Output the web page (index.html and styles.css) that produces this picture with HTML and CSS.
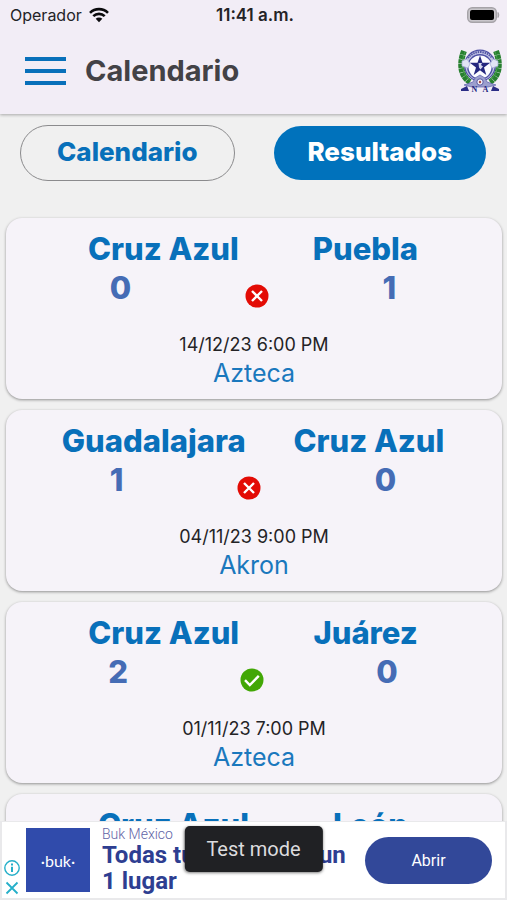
FILE: index.html
```html
<!DOCTYPE html>
<html lang="es">
<head>
<meta charset="utf-8">
<meta name="viewport" content="width=device-width, initial-scale=1">
<title>Calendario</title>
<link rel="stylesheet" href="styles.css">
</head>
<body>
<svg class="defs" aria-hidden="true">
  <symbol id="loss" viewBox="0 0 24 24">
    <circle cx="12" cy="12" r="11.5" fill="#e30b05"/>
    <path d="M7 7l10 10M17 7l-10 10" fill="none" stroke="#fff" stroke-width="2.400"/>
  </symbol>
  <symbol id="win" viewBox="0 0 24 24">
    <circle cx="12" cy="12" r="11.5" fill="#42a706"/>
    <path d="M5 12.200l4.800 4.800 9-9.200" fill="none" stroke="#fff" stroke-width="2.400"/>
  </symbol>
</svg>
<div class="app">
  <header class="top">
    <div class="status">
      <span class="carrier">Operador
        <svg class="wifi" viewBox="0 0 20 16" aria-hidden="true">
          <g fill="none" stroke="#0b0b0d" stroke-width="2.600">
            <path d="M1 5.800a12.800 12.800 0 0 1 18 0"/>
            <path d="M4.300 9.200a8.100 8.100 0 0 1 11.400 0"/>
          </g>
          <path d="M6.700 11.800a4.700 4.700 0 0 1 6.600 0L10 15.200z" fill="#0b0b0d"/>
        </svg>
      </span>
      <span class="clock">11:41 a.m.</span>
      <svg class="battery" viewBox="0 0 33 16" aria-hidden="true">
        <rect x="0.700" y="0.700" width="28.600" height="14.600" rx="4.500" fill="#c9c6cb" stroke="#a6a3a8" stroke-width="1.400"/>
        <rect x="3" y="3" width="24" height="10" rx="2" fill="#000"/>
        <path d="M31 5.500q1.700 2.500 0 5z" fill="#a6a3a8" stroke="#a6a3a8"/>
      </svg>
    </div>
    <div class="bar">
      <button class="menu" type="button" aria-label="Menú"><span></span><span></span><span></span></button>
      <h1>Calendario</h1>
      <svg class="crest" viewBox="0 0 44 44" aria-hidden="true">
        <g fill="none" stroke="#27802f" stroke-width="6" stroke-dasharray="4 0.400">
          <path d="M6 2C2 12 1 26 12 33"/>
          <path d="M38 2c4 10 5 24-6 31"/>
        </g>
        <g fill="none" stroke="#49a04f" stroke-width="1">
          <path d="M7 3C3 12 3 25 13 32"/>
          <path d="M37 3c4 9 4 22-6 29"/>
        </g>
        <circle cx="22" cy="16.500" r="15.300" fill="#c3c5e6" stroke="#4e51a5" stroke-width="1.200"/>
        <path d="M10 9A15 15 0 0 1 34 9" fill="none" stroke="#5558a5" stroke-width="2" stroke-dasharray="1.500 0.800"/>
        <circle cx="22" cy="18" r="12.200" fill="#fbfbff" stroke="#4e51a5" stroke-width="1.400"/>
        <path d="M4 12l5-2 3 5-2 4-6-2zM40 12l-5-2-3 5 2 4 6-2z" fill="#e1e4f4" stroke="#a5aad5" stroke-width="0.700"/>
        <path d="M22 6.500l2.500 7.300h7.700l-6.200 4.600 2.300 7.500-6.300-4.600-6.300 4.600 2.300-7.500-6.200-4.600h7.700z" fill="#25277f"/>
        <path d="M20.500 14h3.500l-1 2 2 1.500-2.500 3-1.500-2z" fill="#d5d7ee"/>
        <path d="M17 29l5-3 5 3 2 4 9 3-8 2H14l-8-2 9-3z" fill="#9c9fcd" stroke="#5d60ad" stroke-width="0.700"/>
        <circle cx="22" cy="33" r="3.200" fill="#f4eef6" stroke="#5558a5"/>
        <circle cx="22" cy="33" r="1.200" fill="#a44b48"/>
        <path d="M3 40l6-3 2 5H3zM41 40l-6-3-2 5h8z" fill="#2b2d86"/>
        <text x="16.500" y="43" text-anchor="middle">N</text>
        <text x="27.500" y="43" text-anchor="middle">A</text>
      </svg>
    </div>
  </header>

  <main class="content">
    <nav class="tabs" aria-label="Vista">
      <button class="tab" type="button">Calendario</button>
      <button class="tab tab-active" type="button">Resultados</button>
    </nav>
    <div class="matches">
      <article class="card">
        <div class="teams"><h2>Cruz Azul</h2><h2>Puebla</h2></div>
        <div class="score"><span>0</span><svg class="outcome"><use href="#loss"/></svg><span>1</span></div>
        <p class="date">14/12/23 6:00 PM</p>
        <p class="venue">Azteca</p>
      </article>
      <article class="card">
        <div class="teams"><h2>Guadalajara</h2><h2>Cruz Azul</h2></div>
        <div class="score"><span>1</span><svg class="outcome"><use href="#loss"/></svg><span>0</span></div>
        <p class="date">04/11/23 9:00 PM</p>
        <p class="venue">Akron</p>
      </article>
      <article class="card">
        <div class="teams"><h2>Cruz Azul</h2><h2>Juárez</h2></div>
        <div class="score"><span>2</span><svg class="outcome"><use href="#win"/></svg><span>0</span></div>
        <p class="date">01/11/23 7:00 PM</p>
        <p class="venue">Azteca</p>
      </article>
      <article class="card">
        <div class="teams"><h2>Cruz Azul</h2><h2>León</h2></div>
      </article>
    </div>
  </main>

  <aside class="ad">
    <div class="ad-tools">
      <button type="button" aria-label="Información del anuncio">
        <svg viewBox="0 0 16 16" aria-hidden="true"><circle cx="8" cy="8" r="7.200" fill="none" stroke="#25afc9" stroke-width="1.400"/><path d="M8 6.800v5.200M8 3.600v2" stroke="#25afc9" stroke-width="2"/></svg>
      </button>
      <button type="button" aria-label="Cerrar anuncio">
        <svg viewBox="0 0 16 16" aria-hidden="true"><path d="M2.500 2.500l11 11M13.500 2.500l-11 11" stroke="#25afc9" stroke-width="1.800"/></svg>
      </button>
    </div>
    <div class="ad-logo">·buk·</div>
    <div class="ad-copy">
      <span class="ad-brand">Buk México</span>
      <p>Todas tus tareas en un<br>1 lugar</p>
    </div>
    <a class="ad-open" href="#">Abrir</a>
    <div class="test-mode">Test mode</div>
  </aside>
</div>
</body>
</html>
```

FILE: styles.css
```css
* {
  box-sizing: border-box;
}

body {
  margin: 0;
  background: #f0f0f0;
  color: #242326;
  font-family: Inter, "Liberation Sans", sans-serif;
}

h1, h2, p {
  margin: 0;
}

button {
  padding: 0;
  border: 0;
  background: none;
  font-family: inherit;
}

.defs {
  display: none;
}

.app {
  display: flex;
  flex-direction: column;
  height: 100vh;
  overflow: hidden;
}

.top {
  flex: none;
  background: #f2edf6;
  box-shadow: 0 1px 3px rgba(0, 0, 0, 0.3);
  z-index: 1;
}

.status {
  display: grid;
  grid-template-columns: 1fr auto 1fr;
  align-items: center;
  height: 30px;
  padding: 0 7px 0 10px;
}

.carrier {
  display: flex;
  align-items: center;
  gap: 7px;
  font-size: 16px;
}

.wifi {
  width: 20px;
  height: 16px;
}

.clock {
  font-size: 17px;
  font-weight: 600;
}

.battery {
  justify-self: end;
  width: 33px;
  height: 16px;
}

.bar {
  display: flex;
  align-items: center;
  gap: 19px;
  height: 84px;
  padding: 0 5px 2px 25px;
}

.menu {
  display: flex;
  flex-direction: column;
  gap: 8px;
  width: 41px;
}

.menu span {
  height: 4px;
  background: #0870ba;
}

h1 {
  color: #434246;
  font-size: 29px;
  font-weight: 700;
  line-height: 34px;
}

.crest {
  width: 44px;
  height: 44px;
  margin-left: auto;
}

.crest text {
  fill: #25277f;
  font-family: "Liberation Serif", serif;
  font-size: 8px;
  font-weight: 700;
}

.content {
  flex: 1;
  min-height: 0;
  overflow: hidden;
}

.tabs {
  display: grid;
  grid-template-columns: 1fr 1fr;
  gap: 38px;
  padding: 11px 20px 37px;
}

.tab {
  height: 56px;
  padding-bottom: 4px;
  border: 1px solid #8b8b8d;
  border-radius: 28px;
  color: #0870ba;
  font-size: 26px;
  font-weight: 800;
}

.tab-active {
  border-color: transparent;
  background: #0072bc padding-box;
  color: #fff;
}

.matches {
  display: grid;
  gap: 11px;
  padding: 0 5px 0 6px;
}

.card {
  height: 181px;
  padding-top: 12px;
  border-radius: 16px;
  background: #f6f3f9;
  box-shadow: 0 1px 3px rgba(0, 0, 0, 0.4);
  text-align: center;
}

.teams,
.score {
  display: flex;
  align-items: center;
  justify-content: space-evenly;
}

.teams {
  padding: 0 10px 0 8px;
}

h2 {
  color: #0870ba;
  font-size: 31px;
  font-weight: 800;
  line-height: 38px;
}

.score {
  height: 50px;
  align-items: flex-start;
  padding-right: 2px;
  color: #456cb5;
  font-size: 31px;
  font-weight: 800;
  line-height: 40px;
}

.outcome {
  width: 44px;
  height: 24px;
  margin-top: 16px;
}

.date {
  margin-top: 15px;
  font-size: 18px;
  line-height: 24px;
}

.venue {
  color: #1a78bd;
  font-size: 25px;
  line-height: 32px;
}

.ad {
  position: relative;
  flex: none;
  display: flex;
  align-items: center;
  height: 79px;
  padding: 0 13px 0 0;
  border: 2px solid #e9e9eb;
  border-top-width: 1px;
  background: #fff;
  font-family: Roboto, sans-serif;
}

.ad-tools {
  display: grid;
  gap: 4px;
  align-self: flex-end;
  width: 24px;
  padding: 0 0 2px 2px;
}

.ad-tools button,
.ad-tools svg {
  display: block;
  width: 16px;
  height: 16px;
}

.ad-logo {
  display: grid;
  place-items: center;
  width: 64px;
  height: 64px;
  background: #304bab;
  color: #fff;
  font-family: Lato, sans-serif;
  font-size: 16px;
}

.ad-copy {
  flex: 1;
  min-width: 0;
  padding-left: 12px;
  white-space: nowrap;
}

.ad-brand {
  display: block;
  color: #6264a6;
  font-size: 14px;
  font-weight: 300;
  line-height: 16px;
}

.ad-copy p {
  color: #2e3e91;
  font-size: 24px;
  font-weight: 700;
  line-height: 26px;
}

.ad-open {
  display: grid;
  place-items: center;
  width: 127px;
  height: 47px;
  border-radius: 24px;
  background: #324899;
  color: #fff;
  font-size: 16px;
  text-decoration: none;
}

.test-mode {
  position: absolute;
  top: 4px;
  left: 50%;
  padding: 10px 22px;
  border-radius: 5px;
  background: #202124;
  box-shadow: 0 1px 3px rgba(0, 0, 0, 0.5);
  color: #dcdcde;
  font-size: 20px;
  line-height: 26px;
  white-space: nowrap;
  transform: translateX(-50%);
}
```
